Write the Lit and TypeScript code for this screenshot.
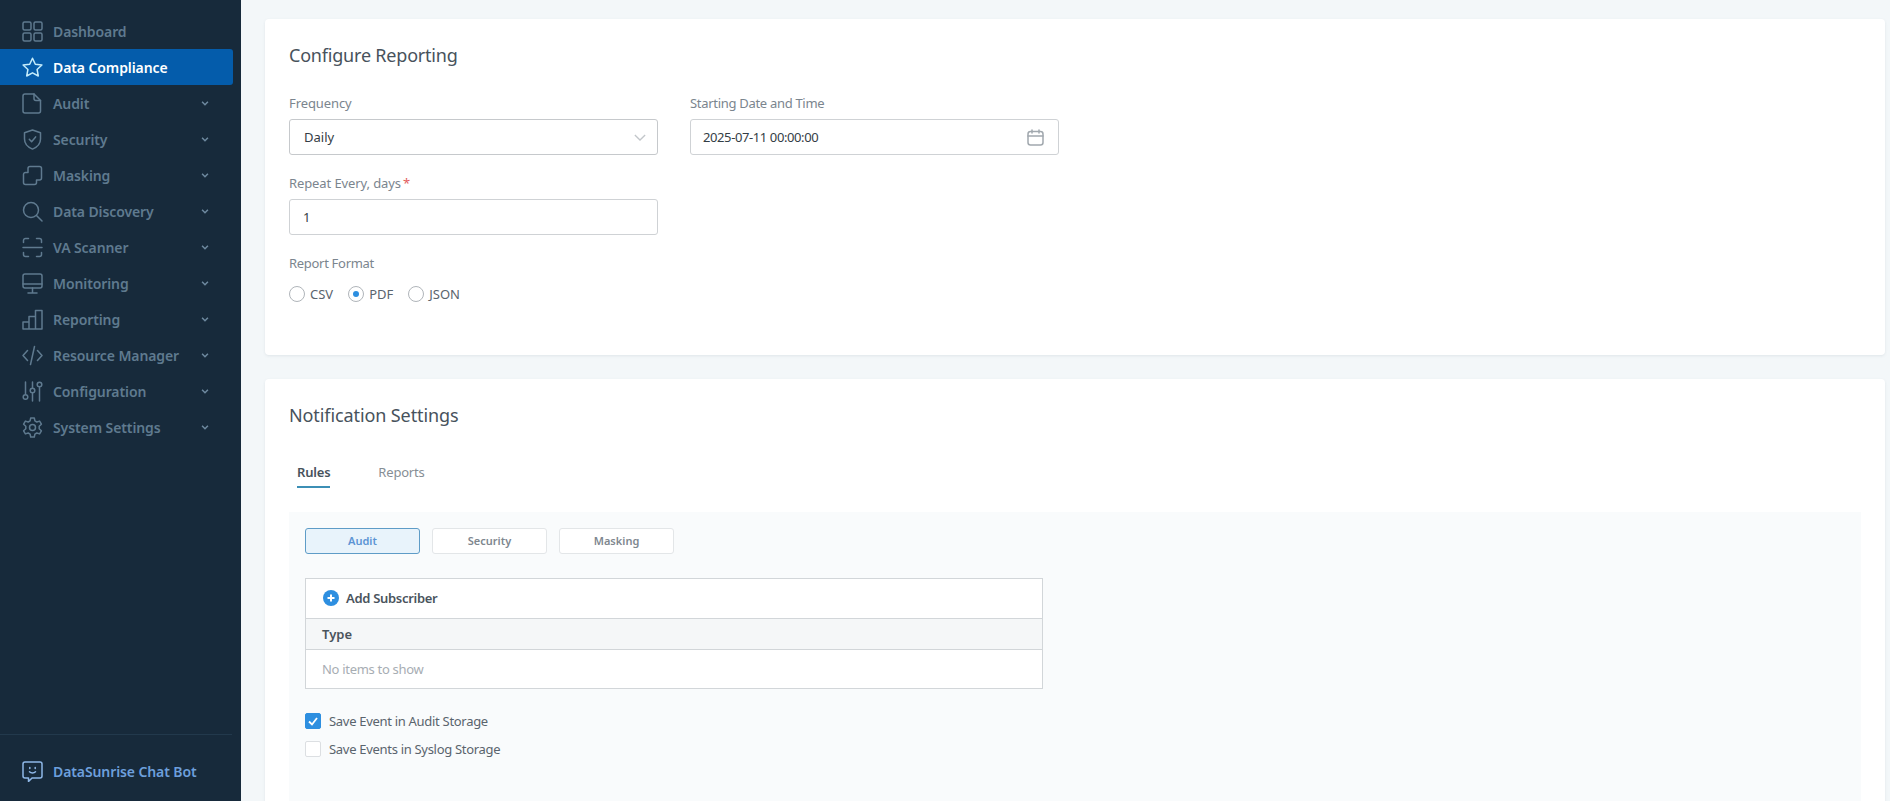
import { LitElement, html, css, svg } from "lit";
import { customElement } from "lit/decorators.js";

const icons: Record<string, unknown> = {
  dashboard: svg`<rect x="1" y="1" width="8" height="8" rx="1.5"/><rect x="12" y="1" width="8" height="8" rx="1.5"/><rect x="1" y="12" width="8" height="8" rx="1.5"/><rect x="12" y="12" width="8" height="8" rx="1.5"/>`,
  star: svg`<path d="M10.5 1.200l2.800 6 6.600.8-4.800 4.500 1.200 6.500-5.800-3.200-5.800 3.200 1.200-6.500L1.100 8l6.600-.8z"/>`,
  audit: svg`<path d="M3 1h9l6.500 6.500V18a2 2 0 0 1-2 2H3a2 2 0 0 1-2-2V3a2 2 0 0 1 2-2z"/><path d="M12 1v4.500a2 2 0 0 0 2 2h4.500"/>`,
  security: svg`<path d="M10.500 1l8 2.800v6.300c0 4.800-3.400 8.200-8 10-4.600-1.800-8-5.200-8-10V3.800z"/><path d="M7.300 10.300l2.300 2.400 4-4.800"/>`,
  masking: svg`<path d="M8 1.500h9.500a2 2 0 0 1 2 2V13a2 2 0 0 1-2 2h-3v2.500a2 2 0 0 1-2 2h-9a2 2 0 0 1-2-2V9.500a2 2 0 0 1 2-2H6v-4a2 2 0 0 1 2-2z"/>`,
  search: svg`<circle cx="9" cy="9" r="7.500"/><path d="M14.500 14.500l5.500 5.500"/>`,
  scanner: svg`<path d="M1.500 5.500V3.500a2 2 0 0 1 2-2h3M14.500 1.500h3a2 2 0 0 1 2 2v2M1.500 15.500v2a2 2 0 0 0 2 2h3M14.500 19.500h3a2 2 0 0 0 2-2v-2M1 10.500h19"/>`,
  monitor: svg`<rect x="1" y="1" width="19" height="14" rx="2"/><path d="M1 11h19M10.500 15v5M6 20h9"/>`,
  reporting: svg`<path d="M1 13h6v7H1zM7 7.500h6.500V20H7zM13.500 1.500H20V20h-6.500z"/>`,
  code: svg`<path d="M5.500 5.500L1 10.500l4.500 5M15.500 5.500l4.500 5-4.500 5M12.500 1.500l-4 18"/>`,
  config: svg`<path d="M3.500 1v12M10.500 1v5.500M10.500 12.500V20M17.500 6.500V20"/><circle cx="3.500" cy="16" r="2.300"/><circle cx="10.500" cy="9.500" r="2.300"/><circle cx="17.500" cy="3.500" r="2.300"/>`,
  settings: svg`<circle cx="10.500" cy="10.500" r="3"/><path d="M8.700 1h3.600l.6 2.900 1.900 1.100 2.800-.9 1.800 3.100-2.200 2v2.600l2.200 2-1.800 3.100-2.800-.9-1.900 1.100-.6 2.900H8.700l-.6-2.900-1.900-1.100-2.800.9-1.800-3.100 2.200-2V9.200L1.600 7.200l1.800-3.100 2.800.9 1.900-1.100z"/>`,
  bot: svg`<path d="M3 1h15a2 2 0 0 1 2 2v12a2 2 0 0 1-2 2h-8l-3.500 3.500V17H3a2 2 0 0 1-2-2V3a2 2 0 0 1 2-2z"/><path d="M7.500 10.800c1.500 1.500 4.500 1.500 6 0M7.800 6.500v1M13.200 6.500v1"/>`,
};

const nav = [
  ["Dashboard", "dashboard", false],
  ["Data Compliance", "star", false],
  ["Audit", "audit", true],
  ["Security", "security", true],
  ["Masking", "masking", true],
  ["Data Discovery", "search", true],
  ["VA Scanner", "scanner", true],
  ["Monitoring", "monitor", true],
  ["Reporting", "reporting", true],
  ["Resource Manager", "code", true],
  ["Configuration", "config", true],
  ["System Settings", "settings", true],
] as const;

@customElement("app-root")
export class AppRoot extends LitElement {
  static styles = css`
    :host {
      display: flex;
      width: 1890px;
      height: 801px;
      overflow: hidden;
      background: #f3f7f9;
      font-family: "Noto Sans", "Open Sans", sans-serif;
      font-size: 13px;
      color: #3f4a54;
    }
    .side {
      width: 241px;
      flex: none;
      background: #172a3b;
      display: flex;
      flex-direction: column;
      padding-top: 13px;
      box-sizing: border-box;
    }
    .nav { flex: 1; }
    .item {
      height: 36px;
      width: 233px;
      display: flex;
      align-items: center;
      padding: 0 24px 0 22px;
      box-sizing: border-box;
      color: #5f7a8f;
      font-size: 14px;
      font-weight: 600;
      gap: 10px;
      border-radius: 0 3px 3px 0;
      letter-spacing: -0.1px;
    }
    .item.active { background: #045cab; color: #fff; }
    .item.active .ic { stroke: #c4ecfb; }
    .ic {
      width: 21px;
      height: 21px;
      flex: none;
      fill: none;
      stroke: #5f7a8f;
      stroke-width: 1.5;
      stroke-linecap: round;
      stroke-linejoin: round;
    }
    .label { flex: 1; white-space: nowrap; }
    .chev {
      width: 8px;
      height: 5px;
      fill: none;
      stroke: #6f8aa0;
      stroke-width: 1.800;
    }
    .foot {
      margin-right: 9px;
      border-top: 1px solid #22394c;
      height: 67px;
      display: flex;
      align-items: center;
      padding: 7px 0 0 22px;
      box-sizing: border-box;
      gap: 10px;
      color: #6d9fdc;
      font-size: 14px;
      font-weight: 600;
      letter-spacing: -0.1px;
    }
    .foot .ic { stroke: #8fb8e8; }
    .main {
      flex: 1;
      padding: 19px 5px 0 24px;
      display: flex;
      flex-direction: column;
      gap: 24px;
      min-width: 0;
    }
    .card {
      background: #fff;
      border-radius: 4px;
      box-shadow: 0 1px 3px rgba(60, 80, 100, 0.1);
      padding: 0 24px;
    }
    .c1 { height: 336px; box-sizing: border-box; flex: none; }
    .c2 { flex: 1; }
    h2 {
      margin: 0;
      font-weight: 400;
      font-size: 18px;
      line-height: 26px;
      color: #47525c;
      letter-spacing: -0.1px;
    }
    .c1 h2 { padding-top: 23px; letter-spacing: -0.2px; }
    .c2 h2 { padding-top: 23px; }
    .grid {
      margin-top: 26px;
      display: grid;
      grid-template-columns: 369px 369px;
      column-gap: 32px;
      row-gap: 19px;
    }
    .lbl {
      display: block;
      font-size: 13px;
      line-height: 18px;
      color: #7b858e;
      margin-bottom: 7px;
      letter-spacing: -0.1px;
    }
    .lbl.tight { letter-spacing: -0.3px; }
    .lbl b { color: #e25d5d; font-weight: 400; margin-left: 2px; }
    .field {
      height: 36px;
      box-sizing: border-box;
      border: 1px solid #cfd2d5;
      border-radius: 3px;
      display: flex;
      align-items: center;
      justify-content: space-between;
      padding: 0 11px 0 14px;
      font-size: 13px;
      color: #343d45;
    }
    .field.sel { border-color: #c6c9cc; }
    .field.date { padding: 0 14px 0 12px; letter-spacing: -0.4px; }
    .field.num { padding-left: 13px; }
    .sel svg { width: 12px; height: 7px; fill: none; stroke: #c2c6ca; stroke-width: 1.500; }
    .cal { width: 17px; height: 17px; fill: none; stroke: #a1a8ae; stroke-width: 1.500; stroke-linecap: round; }
    .fmt { margin-top: 19px; }
    .radios { display: flex; align-items: center; height: 22px; margin-top: 11px; color: #5a646d; font-size: 13px; }
    .radio {
      width: 16px;
      height: 16px;
      box-sizing: border-box;
      border: 1px solid #b0b5ba;
      border-radius: 50%;
      display: flex;
      align-items: center;
      justify-content: center;
      margin-right: 5px;
    }
    .radio.on::after {
      content: "";
      width: 6px;
      height: 6px;
      border-radius: 50%;
      background: #2d8fe0;
    }
    .radios span.t { margin-right: 15px; }
    .tabs {
      display: flex;
      margin-top: 35px;
      padding-left: 8px;
      gap: 48px;
      font-size: 13px;
      line-height: 18px;
    }
    .tab { padding-bottom: 5px; color: #868e95; border-bottom: 2px solid transparent; letter-spacing: -0.2px; }
    .tab.on { color: #47525c; font-weight: 600; border-bottom-color: #3c8fb5; }
    .panel {
      margin-top: 24px;
      background: #f9fbfc;
      padding: 16px;
      height: 300px;
      box-sizing: border-box;
    }
    .btns { display: flex; gap: 12px; }
    .btn {
      width: 115px;
      height: 26px;
      box-sizing: border-box;
      background: #fff;
      border: 1px solid #e3e6e8;
      border-radius: 3px;
      display: flex;
      align-items: center;
      justify-content: center;
      padding-bottom: 1px;
      font-size: 11px;
      font-weight: 600;
      color: #7e878f;
    }
    .btn.on { background: #e8f3fb; border-color: #5e9cc7; color: #5c94d4; }
    .tbl {
      width: 738px;
      margin-top: 24px;
      border: 1px solid #d2d6d9;
      background: #fff;
      box-sizing: border-box;
    }
    .add {
      height: 39px;
      box-sizing: border-box;
      display: flex;
      align-items: center;
      padding: 0 0 1px 17px;
      gap: 7px;
      font-size: 13px;
      font-weight: 600;
      color: #4a545d;
      letter-spacing: -0.3px;
    }
    .add svg { width: 16px; height: 16px; }
    .th {
      height: 32px;
      box-sizing: border-box;
      background: #f5f7f8;
      border-top: 1px solid #d2d6d9;
      border-bottom: 1px solid #d2d6d9;
      display: flex;
      align-items: center;
      padding-left: 16px;
      font-weight: 600;
      font-size: 13px;
      color: #4a545d;
    }
    .td {
      height: 38px;
      display: flex;
      align-items: center;
      padding-left: 16px;
      color: #a7adb3;
      font-size: 13px;
      letter-spacing: -0.3px;
    }
    .checks { margin-top: 24px; display: flex; flex-direction: column; gap: 12px; }
    .chk { display: flex; align-items: center; gap: 8px; height: 16px; color: #5a646d; font-size: 13px; letter-spacing: -0.3px; }
    .box {
      width: 16px;
      height: 16px;
      box-sizing: border-box;
      border: 1px solid #dcdfe2;
      border-radius: 2px;
      background: #fff;
    }
    .box.on {
      background: #2e8fe0;
      border-color: #2e8fe0;
      display: flex;
      align-items: center;
      justify-content: center;
    }
    .box svg { width: 10px; height: 9px; fill: none; stroke: #fff; stroke-width: 1.800; }
  `;

  private icon(name: string) {
    return html`<svg class="ic" viewBox="0 0 21 21">${icons[name]}</svg>`;
  }

  render() {
    return html`
      <aside class="side">
        <div class="nav">
          ${nav.map(
            ([t, i, c]) => html`
              <div class="item ${t === "Data Compliance" ? "active" : ""}">
                ${this.icon(i)}
                <span class="label">${t}</span>
                ${c ? html`<svg class="chev" viewBox="0 0 9 6"><path d="M1 1l3.500 3.500L8 1" /></svg>` : ""}
              </div>
            `
          )}
        </div>
        <div class="foot">${this.icon("bot")}<span>DataSunrise Chat Bot</span></div>
      </aside>
      <main class="main">
        <section class="card c1">
          <h2>Configure Reporting</h2>
          <div class="grid">
            <div>
              <span class="lbl">Frequency</span>
              <div class="field sel">
                <span>Daily</span>
                <svg viewBox="0 0 14 8"><path d="M1 1l6 6 6-6" /></svg>
              </div>
            </div>
            <div>
              <span class="lbl tight">Starting Date and Time</span>
              <div class="field date">
                <span>2025-07-11 00:00:00</span>
                <svg class="cal" viewBox="0 0 17 17"><rect x="1" y="2.500" width="15" height="13.500" rx="2.500" /><path d="M1 7h15M5 1v3M12 1v3" /></svg>
              </div>
            </div>
            <div>
              <span class="lbl">Repeat Every, days<b>*</b></span>
              <div class="field num"><span>1</span></div>
            </div>
          </div>
          <div class="fmt">
            <span class="lbl tight">Report Format</span>
            <div class="radios">
              <span class="radio"></span><span class="t">CSV</span>
              <span class="radio on"></span><span class="t">PDF</span>
              <span class="radio"></span><span class="t">JSON</span>
            </div>
          </div>
        </section>
        <section class="card c2">
          <h2>Notification Settings</h2>
          <div class="tabs">
            <div class="tab on">Rules</div>
            <div class="tab">Reports</div>
          </div>
          <div class="panel">
            <div class="btns">
              <div class="btn on">Audit</div>
              <div class="btn">Security</div>
              <div class="btn">Masking</div>
            </div>
            <div class="tbl">
              <div class="add">
                <svg viewBox="0 0 16 16"><circle cx="8" cy="8" r="8" fill="#2e8fe0" /><path d="M8 4.500v7M4.500 8h7" stroke="#fff" stroke-width="2" /></svg>
                <span>Add Subscriber</span>
              </div>
              <div class="th">Type</div>
              <div class="td">No items to show</div>
            </div>
            <div class="checks">
              <div class="chk">
                <span class="box on"><svg viewBox="0 0 10 9"><path d="M1 4.500l3 3L9 1" /></svg></span>
                <span>Save Event in Audit Storage</span>
              </div>
              <div class="chk"><span class="box"></span><span>Save Events in Syslog Storage</span></div>
            </div>
          </div>
        </section>
      </main>
    `;
  }
}
